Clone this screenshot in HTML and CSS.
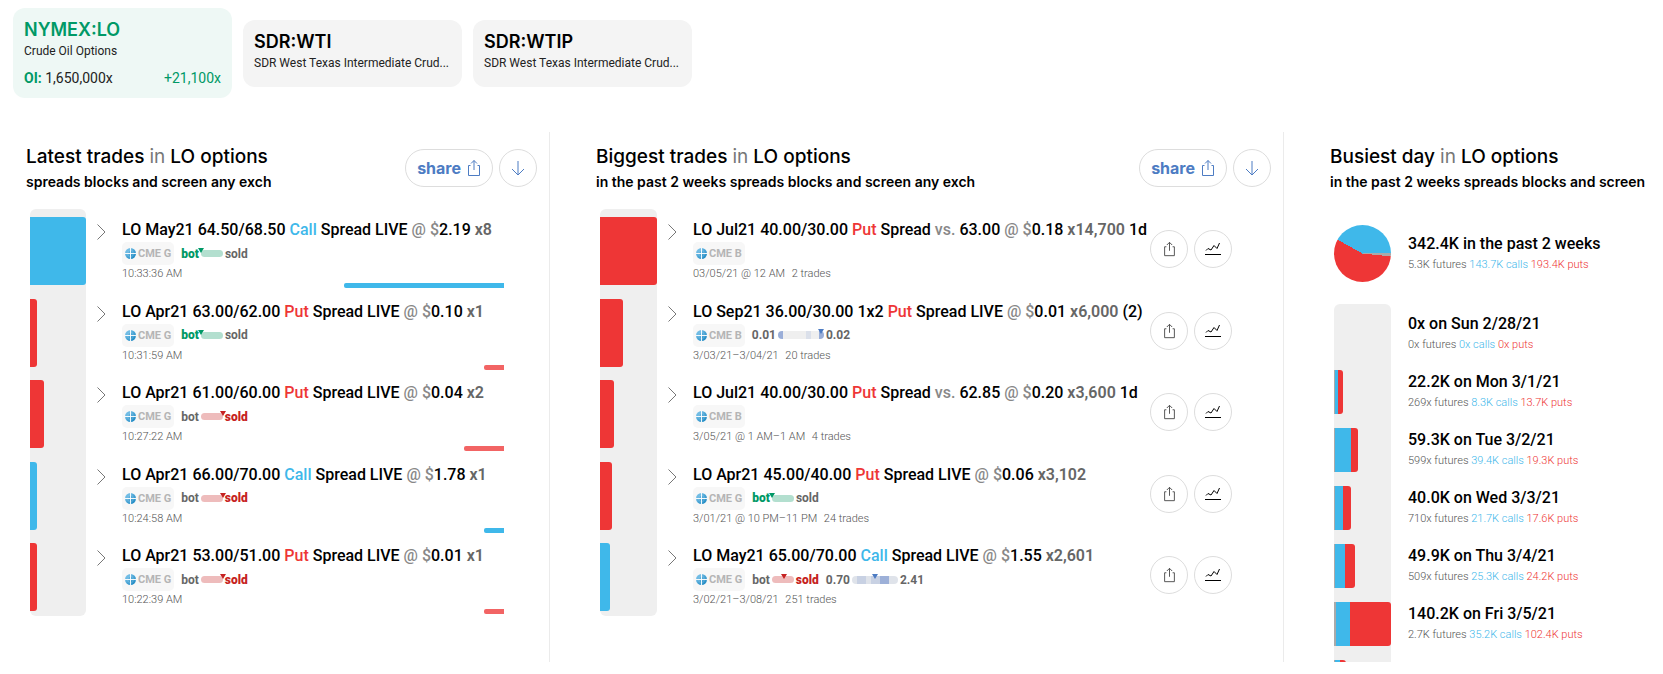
FILE: index.html
```html
<!DOCTYPE html>
<html lang="en">
  <head>
    <meta charset="utf-8" />
    <title>NYMEX:LO Crude Oil Options</title>
    <link rel="stylesheet" href="styles.css">
  </head>
  <body>
    <svg class="sprite" aria-hidden="true">
      <symbol id="share" viewBox="0 0 14 18">
        <path d="M3.500 6.500h-2v10h11v-10h-2M7 11V1.500M4 4.500l3-3 3 3" />
      </symbol>
      <symbol id="down" viewBox="0 0 14 16">
        <path d="M7 1v14M1 9l6 6 6-6" />
      </symbol>
      <symbol id="chevron" viewBox="0 0 9 16">
        <path d="M.5.5L8 8 .5 15.5" />
      </symbol>
      <symbol id="line-chart" viewBox="0 0 16 14">
        <path d="M1 8.500l2-2 3 1.500 3-4.500 3 3L14.500 1M0 12.500h16" />
      </symbol>
      <symbol id="globe" viewBox="0 0 12 12">
        <linearGradient id="sea" x1="0" y1="0" x2="1" y2="1">
          <stop offset="0" stop-color="#8ccdf0" />
          <stop offset="1" stop-color="#0f80bd" />
        </linearGradient>
        <circle cx="6" cy="6" r="6" fill="url(#sea)" />
        <path d="M6 0v12M0 6h12" stroke="#fff" stroke-width="1" />
        <path d="M6 1.500c-4 2-4 7 0 9M6 1.500c4 2 4 7 0 9" fill="none" stroke="#fff" stroke-width=".5" opacity=".4" />
      </symbol>
    </svg>

    <nav class="tabs">
      <a class="tab active" href="#lo">
        <span class="tab-name">NYMEX:LO</span>
        <span class="tab-desc">Crude Oil Options</span>
        <span class="tab-oi"><span><b>OI:</b> 1,650,000x</span><span class="change">+21,100x</span></span>
      </a>
      <a class="tab" href="#wti">
        <span class="tab-name">SDR:WTI</span>
        <span class="tab-desc">SDR West Texas Intermediate Crud...</span>
      </a>
      <a class="tab" href="#wtip">
        <span class="tab-name">SDR:WTIP</span>
        <span class="tab-desc">SDR West Texas Intermediate Crud...</span>
      </a>
    </nav>

    <main class="panels">
      <section class="panel">
        <header class="panel-head">
          <div>
            <h2>Latest trades <span>in</span> LO options</h2>
            <p>spreads blocks and screen any exch</p>
          </div>
          <div class="actions">
            <button class="pill">share <svg class="icon-share"><use href="#share" /></svg></button>
            <button class="round blue" aria-label="Download"><svg class="icon-down"><use href="#down" /></svg></button>
          </div>
        </header>
        <div class="chart">
          <div class="track">
            <div class="bar call" style="width: 100%"></div>
            <div class="bar put" style="width: 12.5%"></div>
            <div class="bar put" style="width: 25%"></div>
            <div class="bar call" style="width: 12.5%"></div>
            <div class="bar put" style="width: 12.5%"></div>
          </div>
          <ul class="trades">
            <li class="trade">
              <svg class="icon-chevron"><use href="#chevron" /></svg>
              <div class="info">
                <h3>LO May21 64.50/68.50 <b class="c">Call</b> Spread LIVE <i>@ $</i>2.19 <em>x8</em></h3>
                <div class="tags">
                  <span class="exch"><svg class="icon-globe"><use href="#globe" /></svg>CME G</span>
                  <span class="side bought"><b>bot</b><span class="meter"><span class="mark" style="left: 0%"></span></span>sold</span>
                </div>
                <p class="time">10:33:36 AM</p>
                <div class="size call" style="width: 42%"></div>
              </div>
            </li>
            <li class="trade">
              <svg class="icon-chevron"><use href="#chevron" /></svg>
              <div class="info">
                <h3>LO Apr21 63.00/62.00 <b class="p">Put</b> Spread LIVE <i>@ $</i>0.10 <em>x1</em></h3>
                <div class="tags">
                  <span class="exch"><svg class="icon-globe"><use href="#globe" /></svg>CME G</span>
                  <span class="side bought"><b>bot</b><span class="meter"><span class="mark" style="left: 0%"></span></span>sold</span>
                </div>
                <p class="time">10:31:59 AM</p>
                <div class="size put" style="width: 5.25%"></div>
              </div>
            </li>
            <li class="trade">
              <svg class="icon-chevron"><use href="#chevron" /></svg>
              <div class="info">
                <h3>LO Apr21 61.00/60.00 <b class="p">Put</b> Spread LIVE <i>@ $</i>0.04 <em>x2</em></h3>
                <div class="tags">
                  <span class="exch"><svg class="icon-globe"><use href="#globe" /></svg>CME G</span>
                  <span class="side sold">bot<span class="meter"><span class="mark" style="left: 100%"></span></span><b>sold</b></span>
                </div>
                <p class="time">10:27:22 AM</p>
                <div class="size put" style="width: 10.5%"></div>
              </div>
            </li>
            <li class="trade">
              <svg class="icon-chevron"><use href="#chevron" /></svg>
              <div class="info">
                <h3>LO Apr21 66.00/70.00 <b class="c">Call</b> Spread LIVE <i>@ $</i>1.78 <em>x1</em></h3>
                <div class="tags">
                  <span class="exch"><svg class="icon-globe"><use href="#globe" /></svg>CME G</span>
                  <span class="side sold">bot<span class="meter"><span class="mark" style="left: 100%"></span></span><b>sold</b></span>
                </div>
                <p class="time">10:24:58 AM</p>
                <div class="size call" style="width: 5.25%"></div>
              </div>
            </li>
            <li class="trade">
              <svg class="icon-chevron"><use href="#chevron" /></svg>
              <div class="info">
                <h3>LO Apr21 53.00/51.00 <b class="p">Put</b> Spread LIVE <i>@ $</i>0.01 <em>x1</em></h3>
                <div class="tags">
                  <span class="exch"><svg class="icon-globe"><use href="#globe" /></svg>CME G</span>
                  <span class="side sold">bot<span class="meter"><span class="mark" style="left: 100%"></span></span><b>sold</b></span>
                </div>
                <p class="time">10:22:39 AM</p>
                <div class="size put" style="width: 5.25%"></div>
              </div>
            </li>
          </ul>
        </div>
      </section>

      <section class="panel">
        <header class="panel-head">
          <div>
            <h2>Biggest trades <span>in</span> LO options</h2>
            <p>in the past 2 weeks spreads blocks and screen any exch</p>
          </div>
          <div class="actions">
            <button class="pill">share <svg class="icon-share"><use href="#share" /></svg></button>
            <button class="round blue" aria-label="Download"><svg class="icon-down"><use href="#down" /></svg></button>
          </div>
        </header>
        <div class="chart">
          <div class="track">
            <div class="bar put" style="width: 100%"></div>
            <div class="bar put" style="width: 41%"></div>
            <div class="bar put" style="width: 25%"></div>
            <div class="bar put" style="width: 21%"></div>
            <div class="bar call" style="width: 18%"></div>
          </div>
          <ul class="trades">
            <li class="trade">
              <svg class="icon-chevron"><use href="#chevron" /></svg>
              <div class="info">
                <h3>LO Jul21 40.00/30.00 <b class="p">Put</b> Spread <i>vs.</i> 63.00 <i>@ $</i>0.18 <em>x14,700</em> 1d</h3>
                <div class="tags">
                  <span class="exch"><svg class="icon-globe"><use href="#globe" /></svg>CME B</span>
                </div>
                <p class="time">03/05/21 @ 12 AM <span>2 trades</span></p>
              </div>
              <div class="row-actions">
                <button class="round" aria-label="Share trade"><svg class="icon-share small"><use href="#share" /></svg></button>
                <button class="round" aria-label="Chart trade"><svg class="icon-chart"><use href="#line-chart" /></svg></button>
              </div>
            </li>
            <li class="trade">
              <svg class="icon-chevron"><use href="#chevron" /></svg>
              <div class="info">
                <h3>LO Sep21 36.00/30.00 1x2 <b class="p">Put</b> Spread LIVE <i>@ $</i>0.01 <em>x6,000</em> (2)</h3>
                <div class="tags">
                  <span class="exch"><svg class="icon-globe"><use href="#globe" /></svg>CME B</span>
                  <span class="range">0.01<span class="meter ends"><span class="mark" style="left: 94%"></span></span>0.02</span>
                </div>
                <p class="time">3/03/21–3/04/21 <span>20 trades</span></p>
              </div>
              <div class="row-actions">
                <button class="round" aria-label="Share trade"><svg class="icon-share small"><use href="#share" /></svg></button>
                <button class="round" aria-label="Chart trade"><svg class="icon-chart"><use href="#line-chart" /></svg></button>
              </div>
            </li>
            <li class="trade">
              <svg class="icon-chevron"><use href="#chevron" /></svg>
              <div class="info">
                <h3>LO Jul21 40.00/30.00 <b class="p">Put</b> Spread <i>vs.</i> 62.85 <i>@ $</i>0.20 <em>x3,600</em> 1d</h3>
                <div class="tags">
                  <span class="exch"><svg class="icon-globe"><use href="#globe" /></svg>CME B</span>
                </div>
                <p class="time">3/05/21 @ 1 AM–1 AM <span>4 trades</span></p>
              </div>
              <div class="row-actions">
                <button class="round" aria-label="Share trade"><svg class="icon-share small"><use href="#share" /></svg></button>
                <button class="round" aria-label="Chart trade"><svg class="icon-chart"><use href="#line-chart" /></svg></button>
              </div>
            </li>
            <li class="trade">
              <svg class="icon-chevron"><use href="#chevron" /></svg>
              <div class="info">
                <h3>LO Apr21 45.00/40.00 <b class="p">Put</b> Spread LIVE <i>@ $</i>0.06 <em>x3,102</em></h3>
                <div class="tags">
                  <span class="exch"><svg class="icon-globe"><use href="#globe" /></svg>CME G</span>
                  <span class="side bought"><b>bot</b><span class="meter"><span class="mark" style="left: 0%"></span></span>sold</span>
                </div>
                <p class="time">3/01/21 @ 10 PM–11 PM <span>24 trades</span></p>
              </div>
              <div class="row-actions">
                <button class="round" aria-label="Share trade"><svg class="icon-share small"><use href="#share" /></svg></button>
                <button class="round" aria-label="Chart trade"><svg class="icon-chart"><use href="#line-chart" /></svg></button>
              </div>
            </li>
            <li class="trade">
              <svg class="icon-chevron"><use href="#chevron" /></svg>
              <div class="info">
                <h3>LO May21 65.00/70.00 <b class="c">Call</b> Spread LIVE <i>@ $</i>1.55 <em>x2,601</em></h3>
                <div class="tags">
                  <span class="exch"><svg class="icon-globe"><use href="#globe" /></svg>CME G</span>
                  <span class="side sold">bot<span class="meter"><span class="mark" style="left: 56%"></span></span><b>sold</b></span>
                  <span class="range">0.70<span class="meter spread"><span class="mark" style="left: 50%"></span></span>2.41</span>
                </div>
                <p class="time">3/02/21–3/08/21 <span>251 trades</span></p>
              </div>
              <div class="row-actions">
                <button class="round" aria-label="Share trade"><svg class="icon-share small"><use href="#share" /></svg></button>
                <button class="round" aria-label="Chart trade"><svg class="icon-chart"><use href="#line-chart" /></svg></button>
              </div>
            </li>
          </ul>
        </div>
      </section>

      <section class="panel">
        <header class="panel-head">
          <div>
            <h2>Busiest day <span>in</span> LO options</h2>
            <p>in the past 2 weeks spreads blocks and screen</p>
          </div>
        </header>
        <div class="total">
          <div class="pie"></div>
          <div class="day">
            <h3>342.4K in the past 2 weeks</h3>
            <p>5.3K futures <span class="c">143.7K calls</span> <span class="p">193.4K puts</span></p>
          </div>
        </div>
        <div class="chart days">
          <div class="track">
            <div class="bar" style="width: 0%"></div>
            <div class="bar" style="width: 16%"><span style="flex: 1"></span><span class="call" style="flex: 3"></span><span class="put" style="flex: 5"></span></div>
            <div class="bar" style="width: 42%"><span style="flex: 1"></span><span class="call" style="flex: 16"></span><span class="put" style="flex: 7"></span></div>
            <div class="bar" style="width: 30%"><span style="flex: 1"></span><span class="call" style="flex: 8"></span><span class="put" style="flex: 8"></span></div>
            <div class="bar" style="width: 37%"><span style="flex: 1"></span><span class="call" style="flex: 10"></span><span class="put" style="flex: 10"></span></div>
            <div class="bar" style="width: 100%"><span style="flex: 2"></span><span class="call" style="flex: 14"></span><span class="put" style="flex: 41"></span></div>
            <div class="bar" style="width: 21%"><span style="flex: 1"></span><span class="call" style="flex: 5"></span><span class="put" style="flex: 6"></span></div>
          </div>
          <div class="day-list">
            <div class="day">
              <h3>0x on Sun 2/28/21</h3>
              <p>0x futures <span class="c">0x calls</span> <span class="p">0x puts</span></p>
            </div>
            <div class="day">
              <h3>22.2K on Mon 3/1/21</h3>
              <p>269x futures <span class="c">8.3K calls</span> <span class="p">13.7K puts</span></p>
            </div>
            <div class="day">
              <h3>59.3K on Tue 3/2/21</h3>
              <p>599x futures <span class="c">39.4K calls</span> <span class="p">19.3K puts</span></p>
            </div>
            <div class="day">
              <h3>40.0K on Wed 3/3/21</h3>
              <p>710x futures <span class="c">21.7K calls</span> <span class="p">17.6K puts</span></p>
            </div>
            <div class="day">
              <h3>49.9K on Thu 3/4/21</h3>
              <p>509x futures <span class="c">25.3K calls</span> <span class="p">24.2K puts</span></p>
            </div>
            <div class="day">
              <h3>140.2K on Fri 3/5/21</h3>
              <p>2.7K futures <span class="c">35.2K calls</span> <span class="p">102.4K puts</span></p>
            </div>
          </div>
        </div>
      </section>
    </main>
  </body>
</html>
```
FILE: styles.css
```css
* {
  box-sizing: border-box;
}
body {
  margin: 0;
  height: 100vh;
  display: flex;
  flex-direction: column;
  background: #fff;
  color: #000;
  font-family: Roboto, sans-serif;
}
h2,
h3,
p,
ul {
  margin: 0;
  padding: 0;
}
.sprite {
  position: absolute;
  width: 0;
  height: 0;
}

/* instrument tabs */
.tabs {
  display: flex;
  align-items: center;
  gap: 11px;
  padding: 8px 13px 0;
}
.tab {
  display: flex;
  flex-direction: column;
  width: 219px;
  min-height: 67px;
  padding: 10px 11px;
  border-radius: 12px;
  background: #f4f4f4;
  color: #222;
  text-decoration: none;
}
.tab-name {
  color: #000;
  font-family: Inter, sans-serif;
  font-size: 18px;
  font-weight: 600;
  line-height: 24px;
}
.tab-desc {
  font-size: 12px;
  line-height: 18px;
  white-space: nowrap;
}
.tab-oi {
  display: flex;
  justify-content: space-between;
  margin-top: 8px;
  font-size: 14px;
  line-height: 20px;
}
.tab.active {
  background: #eef8f5;
}
.active .tab-name,
.active b,
.change {
  color: #009966;
}

/* panels */
.panels {
  flex: 1;
  min-height: 0;
  display: grid;
  grid-template-columns: 550fr 734fr 379fr;
  margin: 34px 0 12px;
  overflow: hidden;
}
.panel {
  min-width: 0;
  padding: 11px 12px 0 46px;
  border-right: 1px solid #ebebeb;
}
.panel:first-child {
  padding-left: 26px;
}
.panel:last-child {
  border-right: 0;
}
.panel-head {
  display: flex;
  justify-content: space-between;
  height: 66px;
  font-family: Inter, sans-serif;
  white-space: nowrap;
}
.panel-head h2 {
  font-size: 19px;
  font-weight: 500;
  line-height: 28px;
}
.panel-head h2 span {
  color: #777;
  font-weight: 400;
}
.panel-head p {
  font-size: 14px;
  font-weight: 600;
  line-height: 22px;
}
.actions,
.row-actions {
  display: flex;
  gap: 6px;
}
.actions {
  padding-top: 6px;
}
button {
  display: flex;
  align-items: center;
  justify-content: center;
  height: 38px;
  padding: 0;
  border: 1px solid #ddd;
  border-radius: 19px;
  background: #fff;
  color: #444;
  cursor: pointer;
}
.pill {
  gap: 6px;
  padding: 0 11px;
  color: #4d7cc3;
  font-family: Inter, sans-serif;
  font-size: 16px;
  font-weight: 700;
}
.round {
  width: 38px;
}
.blue {
  color: #4d7cc3;
}
svg {
  flex: none;
  fill: none;
  stroke: currentColor;
  stroke-width: 1;
}
.icon-share {
  width: 14px;
  height: 18px;
}
.icon-share.small {
  width: 13px;
  height: 16px;
}
.icon-down {
  width: 14px;
  height: 16px;
}
.icon-chart {
  width: 16px;
  height: 14px;
  color: #000;
}
.icon-chevron {
  width: 9px;
  height: 16px;
  margin-top: 7px;
  color: #777;
}
.icon-globe {
  width: 11px;
  height: 11px;
  stroke: none;
}

/* bars */
.chart {
  display: flex;
  padding-left: 4px;
}
.track {
  flex: none;
  display: flex;
  flex-direction: column;
  justify-content: space-between;
  width: 57px;
  padding: 8px 0 5px;
  border-radius: 6px;
  background: #efefef;
}
.panel:first-child .track {
  width: 56px;
}
.bar {
  display: flex;
  height: 68px;
  border-radius: 0 3px 3px 0;
  overflow: hidden;
}
.bar span {
  background: #aaa;
}
.call,
.bar .call {
  background: #3fb8ea;
}
.put,
.bar .put {
  background: #ee3636;
}
.c {
  color: #3fb8ea;
}
.p {
  color: #ee3636;
}

/* trades */
.trades {
  flex: 1;
  display: flex;
  flex-direction: column;
  justify-content: space-between;
  min-width: 0;
  min-height: 407px;
  padding: 8px 33px 2px 11px;
  list-style: none;
}
.trade {
  display: flex;
  min-height: 71px;
}
.info {
  flex: 1;
  display: flex;
  flex-direction: column;
  min-width: 0;
  margin-left: 16px;
}
h3 {
  font-size: 16px;
  font-weight: 500;
  line-height: 24px;
  white-space: nowrap;
}
.info h3 {
  line-height: 25px;
}
h3 b {
  font-weight: 500;
}
h3 i {
  color: #888;
  font-style: normal;
}
h3 em {
  color: #666;
  font-style: normal;
  font-weight: 600;
}
.tags {
  display: flex;
  align-items: center;
  gap: 7px;
  height: 23px;
  color: #666;
  font-size: 12px;
  font-weight: 700;
}
.exch {
  display: flex;
  align-items: center;
  gap: 2px;
  height: 23px;
  padding: 0 3px;
  border-radius: 5px;
  background: #f7f7f7;
  color: #b5b5b5;
  font-size: 11px;
}
.side,
.range {
  display: flex;
  align-items: center;
  gap: 2px;
}
.meter {
  position: relative;
  width: 22px;
  height: 7px;
  border-radius: 4px;
}
.mark {
  position: absolute;
  top: -2px;
  margin-left: -3px;
  border: 3px solid transparent;
  border-top: 5px solid;
  border-bottom: 0;
}
.bought b,
.bought .mark {
  color: #009966;
}
.bought .meter {
  background: #b3dfcf;
}
.sold b,
.sold .mark {
  color: #c62222;
}
.sold .meter {
  background: #eebcbc;
}
.bought .mark,
.sold .mark,
.range .mark {
  border-right-color: transparent;
  border-left-color: transparent;
}
.range .meter {
  width: 46px;
  height: 8px;
  color: #4d7cc3;
}
.ends {
  background: linear-gradient(90deg, #9aaed8 5px, #efefef 5px 28px, #dbe0ea 28px 33px, #efefef 33px 41px, #9aaed8 41px);
}
.spread {
  background: linear-gradient(90deg, #dfe3ea 5px, #c8d1e3 5px 14px, #dfe3ea 14px 19px, #c8d1e3 19px 28px, #9db0d8 28px 37px, #dfe3ea 37px);
}
.time {
  color: #555;
  font-size: 11px;
  font-weight: 300;
  line-height: 17px;
}
.time span {
  margin-left: 4px;
}
.size {
  height: 5px;
  margin: auto 0 0 auto;
  border-radius: 2px 0 0 2px;
}
.size.put {
  background: #f26464;
}
.row-actions {
  margin-top: 13px;
  margin-right: 6px;
}

/* busiest day */
.total {
  display: flex;
  align-items: center;
  gap: 17px;
  height: 57px;
  margin: 16px 0 22px 4px;
}
.pie {
  width: 57px;
  height: 57px;
  border-radius: 50%;
  background: conic-gradient(#3fb8ea 0 90deg, #aaa 90deg 96deg, #ee3636 96deg 299deg, #3fb8ea 299deg);
}
.day {
  height: 44px;
  white-space: nowrap;
}
.day p {
  color: #555;
  font-size: 11px;
  font-weight: 300;
  line-height: 18px;
}
.day p .c {
  color: #3fb8ea;
}
.day p .p {
  color: #ee3636;
}
.days .bar {
  flex: none;
  height: 44px;
}
.days .track {
  justify-content: flex-start;
  gap: 14px;
}
.day-list {
  display: flex;
  flex-direction: column;
  gap: 14px;
  padding: 8px 0 0 17px;
}
```
